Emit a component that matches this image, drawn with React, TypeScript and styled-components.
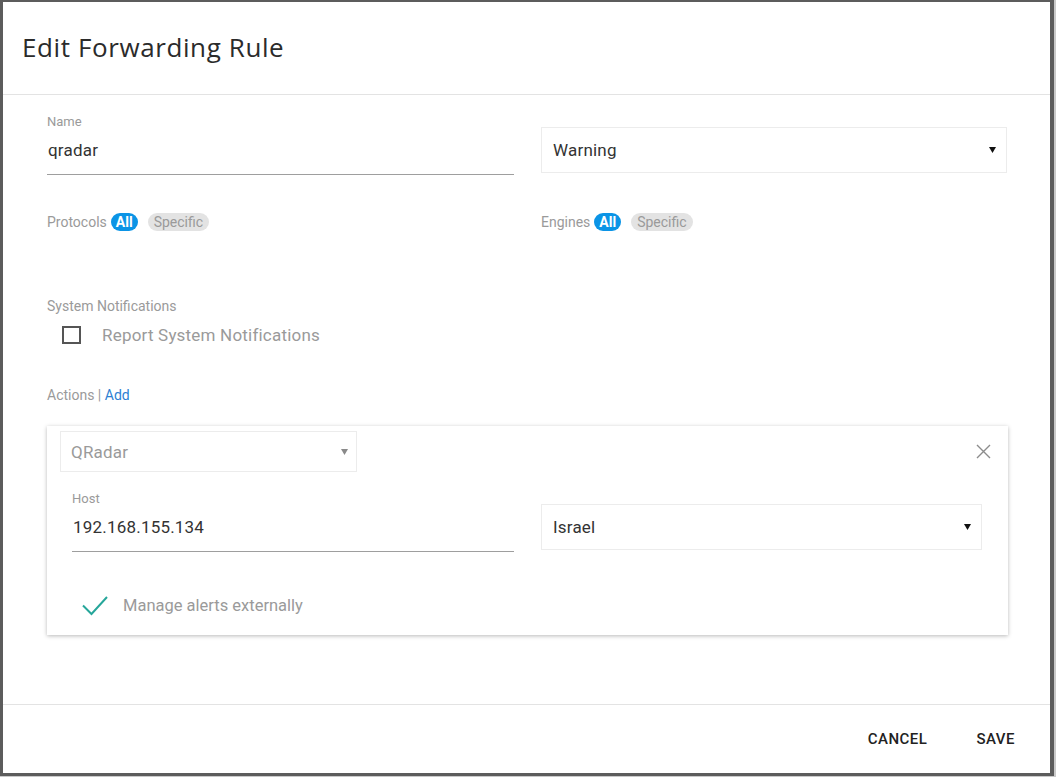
import styled, { createGlobalStyle } from "styled-components";

const GlobalStyle = createGlobalStyle`
	html, body {
		margin: 0;
		padding: 0;
		background: #c9c9c9;
	}
	* {
		box-sizing: border-box;
	}
`;

interface PillProps {
	active?: boolean;
}

interface SelectProps {
	muted?: boolean;
}

function Caret({ muted }: SelectProps) {
	return (
		<svg width="7" height="6" viewBox="0 0 7 6">
			<path d="M0 0 H7 L3.5 6 Z" fill={muted ? "#8a8a8a" : "#111"} />
		</svg>
	);
}

function App() {
	return (
		<>
			<GlobalStyle />
			<Frame>
				<Header>
					<Title>Edit Forwarding Rule</Title>
				</Header>
				<Body>
					<Columns>
						<Field>
							<Label>Name</Label>
							<Input>qradar</Input>
						</Field>
						<Select>
							<span>Warning</span>
							<Caret />
						</Select>
					</Columns>

					<ToggleColumns>
						<ToggleRow>
							<SmallText>Protocols</SmallText>
							<Pill active>All</Pill>
							<Pill>Specific</Pill>
						</ToggleRow>
						<ToggleRow>
							<SmallText>Engines</SmallText>
							<Pill active>All</Pill>
							<Pill>Specific</Pill>
						</ToggleRow>
					</ToggleColumns>

					<SectionLabel>System Notifications</SectionLabel>
					<CheckRow>
						<CheckBox />
						<CheckLabel>Report System Notifications</CheckLabel>
					</CheckRow>

					<ActionsLabel>
						Actions | <AddLink>Add</AddLink>
					</ActionsLabel>

					<ActionCard>
						<CardTop>
							<TypeSelect muted>
								<span>QRadar</span>
								<Caret muted />
							</TypeSelect>
							<CloseButton>
								<svg width="15" height="15" viewBox="0 0 15 15">
									<path d="M1 1 L14 14 M14 1 L1 14" stroke="#8c8c8c" strokeWidth="1.4" fill="none" />
								</svg>
							</CloseButton>
						</CardTop>
						<CardColumns>
							<Field>
								<Label>Host</Label>
								<Input>192.168.155.134</Input>
							</Field>
							<Select>
								<span>Israel</span>
								<Caret />
							</Select>
						</CardColumns>
						<ManageRow>
							<svg width="26" height="21" viewBox="0 0 26 21">
								<polyline points="1,10.5 9.5,19 25,2" fill="none" stroke="#26a69a" strokeWidth="2" />
							</svg>
							<ManageLabel>Manage alerts externally</ManageLabel>
						</ManageRow>
					</ActionCard>
				</Body>
				<Footer>
					<FlatButton>CANCEL</FlatButton>
					<FlatButton>SAVE</FlatButton>
				</Footer>
			</Frame>
		</>
	);
}

const Frame = styled.div`
	width: 1054px;
	height: 776px;
	background: #fff;
	border-top: 2px solid #5c5c5c;
	border-left: 3px solid #5c5c5c;
	border-right: 4px solid #5c5c5c;
	border-bottom: 3px solid #5c5c5c;
	display: flex;
	flex-direction: column;
	font-family: Roboto, "Liberation Sans", sans-serif;
`;

const Header = styled.div`
	height: 93px;
	border-bottom: 1px solid #e3e3e3;
	display: flex;
	align-items: center;
	padding: 0 0 2px 19px;
`;

const Title = styled.h1`
	margin: 0;
	font-family: "Open Sans", "Liberation Sans", sans-serif;
	font-size: 26px;
	letter-spacing: 0.6px;
	font-weight: 400;
	color: #2b2b2b;
`;

const Body = styled.div`
	flex: 1;
	padding: 20px 43px 0 44px;
`;

const Columns = styled.div`
	display: grid;
	grid-template-columns: 467px 466px;
	column-gap: 27px;
	align-items: end;
`;

const Field = styled.div`
	display: flex;
	flex-direction: column;
`;

const Label = styled.div`
	font-size: 13px;
	line-height: 14px;
	color: #9a9a9a;
	margin-bottom: 2px;
`;

const Input = styled.div`
	font-size: 17px;
	line-height: 20px;
	letter-spacing: 0.2px;
	color: #333;
	padding: 9px 0 14px 1px;
	border-bottom: 1px solid #9e9e9e;
`;

const Select = styled.div<SelectProps>`
	height: 46px;
	margin-bottom: 2px;
	border: 1px solid #ececec;
	display: flex;
	align-items: center;
	justify-content: space-between;
	padding: 0 10px 0 11px;
	font-size: 17px;
	letter-spacing: 0.2px;
	color: ${({ muted }) => (muted ? "#9a9a9a" : "#333")};
`;

const TypeSelect = styled(Select)`
	width: 297px;
	height: 41px;
	margin: 0 0 0 13px;
	padding: 0 8px 0 10px;
`;

const ToggleColumns = styled(Columns)`
	margin-top: 38px;
`;

const ToggleRow = styled.div`
	display: flex;
	align-items: center;
	height: 18px;
`;

const SmallText = styled.span`
	font-size: 14px;
	color: #9a9a9a;
	margin-right: 4px;
`;

const Pill = styled.span<PillProps>`
	height: 18px;
	line-height: 18px;
	padding: 0 ${({ active }) => (active ? 5 : 6)}px;
	border-radius: 9px;
	font-size: 14px;
	margin-right: 10px;
	font-weight: ${({ active }) => (active ? 700 : 400)};
	background: ${({ active }) => (active ? "#0b94e6" : "#e3e3e3")};
	color: ${({ active }) => (active ? "#fff" : "#9a9a9a")};
`;

const SectionLabel = styled.div`
	margin-top: 67px;
	font-size: 14px;
	line-height: 16px;
	color: #9a9a9a;
`;

const CheckRow = styled.div`
	margin-top: 6px;
	height: 30px;
	display: flex;
	align-items: center;
	padding-left: 15px;
`;

const CheckBox = styled.span`
	width: 19px;
	height: 18px;
	border: 2px solid #555;
	margin-right: 21px;
`;

const CheckLabel = styled.span`
	font-size: 17px;
	letter-spacing: 0.2px;
	color: #9a9a9a;
`;

const ManageLabel = styled(CheckLabel)`
	font-size: 16.5px;
	letter-spacing: 0;
`;

const ActionsLabel = styled.div`
	margin-top: 37px;
	font-size: 14px;
	line-height: 16px;
	color: #9a9a9a;
`;

const AddLink = styled.span`
	color: #2d7fd3;
`;

const ActionCard = styled.div`
	margin-top: 23px;
	width: 961px;
	padding: 5px 0 15px;
	background: #fff;
	box-shadow: 0 1px 4px rgba(0, 0, 0, 0.28);
`;

const CardTop = styled.div`
	display: flex;
	align-items: center;
	justify-content: space-between;
`;

const CloseButton = styled.span`
	display: flex;
	margin-right: 17px;
`;

const CardColumns = styled(Columns)`
	grid-template-columns: 442px 441px;
	padding: 0 26px 0 25px;
	margin-top: 20px;
`;

const ManageRow = styled.div`
	margin-top: 38px;
	height: 30px;
	display: flex;
	align-items: center;
	gap: 15px;
	padding-left: 35px;
`;

const Footer = styled.div`
	height: 69px;
	border-top: 1px solid #e3e3e3;
	display: flex;
	align-items: center;
	justify-content: flex-end;
	gap: 33px;
	padding: 0 27px 0 0;
`;

const FlatButton = styled.span`
	padding: 8px;
	font-size: 15px;
	font-weight: 500;
	letter-spacing: 0.5px;
	color: #222;
`;

export default App;
